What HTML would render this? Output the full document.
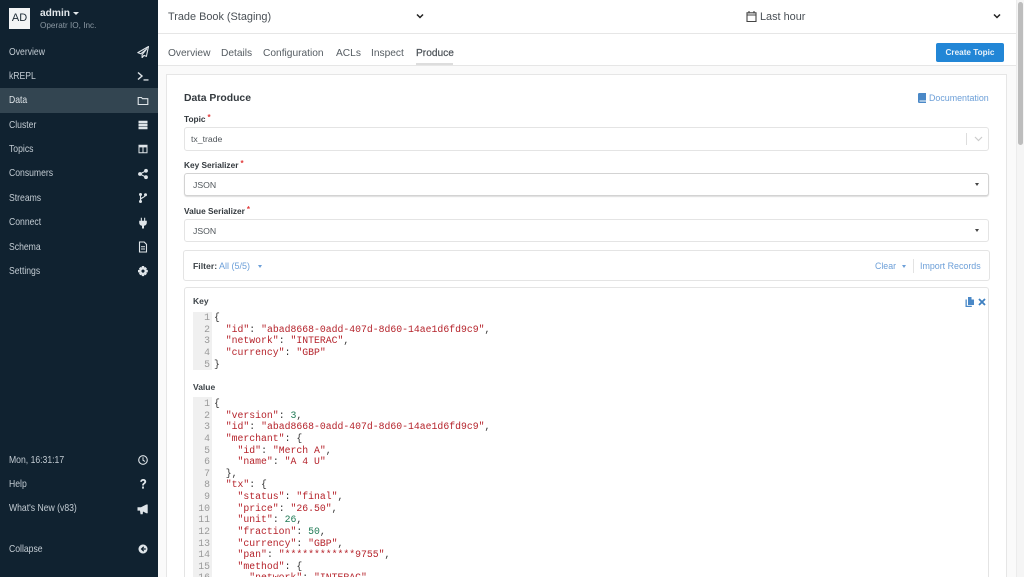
<!DOCTYPE html>
<html><head><meta charset="utf-8">
<style>
html,body{margin:0;padding:0;width:1024px;height:577px;overflow:hidden;background:#fafafa;font-family:"Liberation Sans",sans-serif;color:#3a3f44}
#w{position:relative;width:1024px;height:577px;overflow:hidden}
.a{position:absolute;white-space:nowrap}
.nav{position:absolute;left:9px;font-size:10.4px;color:#c3ccd3;white-space:nowrap;line-height:12px;transform:scaleX(.83);transform-origin:0 0}
.ic{position:absolute;left:137px;width:12px;height:12px;fill:#dfe5e9}
.tab{position:absolute;top:47px;font-size:10.2px;color:#555c62;line-height:13px;white-space:nowrap}
.lab{position:absolute;left:184px;font-size:8.3px;font-weight:bold;color:#33393e;line-height:11px;white-space:nowrap}
.lab i{color:#e23b3b;font-style:normal;font-size:8px;position:relative;top:-2px;margin-left:2px}
.box{position:absolute;left:184px;width:803px;background:#fff;border:1px solid #e4e4e4;border-radius:3px}
.val{position:absolute;left:193px;font-size:8.7px;color:#50565b;line-height:12px}
.caret{position:absolute;width:0;height:0;border-left:2.5px solid transparent;border-right:2.5px solid transparent;border-top:3px solid #444}
.code{position:absolute;font-family:"Liberation Mono",monospace;font-size:9.8px;line-height:11.62px;white-space:pre;color:#333;margin:0}
.ln{position:absolute;background:#f0f0f0;color:#9a9a9a;text-align:right;font-family:"Liberation Mono",monospace;font-size:9.8px;line-height:11.62px;white-space:pre;margin:0;padding-right:2px;box-sizing:border-box}
.s{color:#b5232b}.n{color:#1f7a55}
.link{color:#6c9fd8}
</style></head><body><div id="w">

<!-- sidebar -->
<div class="a" style="left:0;top:0;width:158px;height:577px;background:#102230"></div>
<div class="a" style="left:0;top:88px;width:158px;height:25px;background:#334551"></div>
<div class="a" style="left:9px;top:8px;width:21px;height:21px;background:#f2f4f5;color:#1c2a35;font-size:11px;line-height:21px;text-align:center">AD</div>
<div class="a" style="left:40px;top:7px;font-size:10.2px;font-weight:bold;color:#e3e8eb;line-height:13px">admin</div>
<div class="caret" style="left:73px;top:12px;border-left-width:3.5px;border-right-width:3.5px;border-top:3.5px solid #e3e8eb"></div>
<div class="a" style="left:40px;top:20px;font-size:8.2px;color:#8b98a2;line-height:11px">Operatr IO, Inc.</div>

<div class="nav" style="top:47px">Overview</div>
<div class="nav" style="top:71px">kREPL</div>
<div class="nav" style="top:95px;color:#dde3e7">Data</div>
<div class="nav" style="top:120px">Cluster</div>
<div class="nav" style="top:144px">Topics</div>
<div class="nav" style="top:168px">Consumers</div>
<div class="nav" style="top:193px">Streams</div>
<div class="nav" style="top:217px">Connect</div>
<div class="nav" style="top:242px">Schema</div>
<div class="nav" style="top:266px">Settings</div>
<div class="nav" style="top:455px">Mon, 16:31:17</div>
<div class="nav" style="top:479px">Help</div>
<div class="nav" style="top:503px">What's New (v83)</div>
<div class="nav" style="top:544px">Collapse</div>

<svg class="ic" style="top:46px" viewBox="0 0 12 12"><path d="M11.5 .5 .8 6.6l3 1.2 6-5-4.7 5.900v3l1.900-2.300 2.400 1z" fill="none" stroke="#dfe5e9" stroke-width="1.100" stroke-linejoin="round"/></svg>
<svg class="ic" style="top:70px" viewBox="0 0 12 12"><path d="M1 2.500 5 6 1 9.500" fill="none" stroke="#dfe5e9" stroke-width="1.400"/><path d="M6.500 9.300h5v1.300h-5z"/></svg>
<svg class="ic" style="top:95px" viewBox="0 0 12 12"><path d="M1.200 2.500h3.300l1 1.200h5.300v5.800H1.200z" fill="none" stroke="#dfe5e9" stroke-width="1.100"/></svg>
<svg class="ic" style="top:119px" viewBox="0 0 12 12"><path d="M1.500 1.800h9v2.400h-9zM1.500 4.800h9v2.400h-9zM1.500 7.800h9v2.400h-9z"/></svg>
<svg class="ic" style="top:143px" viewBox="0 0 12 12"><path fill-rule="evenodd" d="M1.500 1.800h9v8.400h-9zM2.500 4.400v4.800h3V4.400zM6.500 4.400v4.800h3V4.400z"/></svg>
<svg class="ic" style="top:168px" viewBox="0 0 12 12"><circle cx="9" cy="2.800" r="1.900"/><circle cx="9" cy="9.200" r="1.900"/><circle cx="3" cy="6" r="1.900"/><path d="M3 6 9 2.800M3 6l6 3.200" stroke="#dfe5e9" stroke-width="1.100"/></svg>
<svg class="ic" style="top:192px" viewBox="0 0 12 12"><circle cx="3.500" cy="2.500" r="1.500"/><circle cx="3.500" cy="9.500" r="1.500"/><circle cx="8.500" cy="2.800" r="1.500"/><path d="M3.500 2.500v7M8.500 2.800c0 3-5 2.500-5 5" fill="none" stroke="#dfe5e9" stroke-width="1.100"/></svg>
<svg class="ic" style="top:217px" viewBox="0 0 12 12"><path d="M3.800 .8h1.100v3H7.100v-3h1.100v3h1.600v1.700c0 2-1.200 3-2.800 3.300V11.500H5V8.800C3.400 8.500 2.200 7.500 2.200 5.500V3.800h1.600z"/></svg>
<svg class="ic" style="top:241px" viewBox="0 0 12 12"><path d="M2.500 1h4.700l2.300 2.400V11h-7z" fill="none" stroke="#dfe5e9" stroke-width="1.100"/><path d="M4 5.300h4v1H4zM4 7.500h4v1H4z"/></svg>
<svg class="ic" style="top:265px" viewBox="0 0 12 12"><path fill-rule="evenodd" d="M4.900 1h2.200l.3 1.500 1-.5 1.500 1.500-.6 1.200 1.500.3v2.200l-1.500.4.600 1.100-1.500 1.500-1-.6-.3 1.500H4.900l-.4-1.500-1 .6L2 8.700l.6-1.100L1 7.200V5l1.600-.3L2 3.500 3.500 2l1 .5zM6 4.500a1.600 1.600 0 1 0 .01 0z"/></svg>
<svg class="ic" style="top:454px" viewBox="0 0 12 12"><circle cx="6" cy="6" r="4.300" fill="none" stroke="#dfe5e9" stroke-width="1.100"/><path d="M6 3.200v3l2 1.200" fill="none" stroke="#dfe5e9"/></svg>
<svg class="ic" style="top:478px" viewBox="0 0 12 12"><path d="M3.200 3.800C3.400 1.800 4.800 1 6.200 1c1.700 0 3 1 3 2.600 0 2.200-2.300 2.100-2.300 3.900H5.100c0-2.700 2.200-2.500 2.200-3.800 0-.6-.5-1-1.200-1-.8 0-1.100.5-1.200 1.200zM5.100 8.500h1.800v2.100H5.100z"/></svg>
<svg class="ic" style="top:503px" viewBox="0 0 12 12"><path d="M.5 4.200h3.500L9.300 1.500h1.400v8.700H9.300L6 8.500l-.3 2.700H3.500L3 7.600H.5z"/></svg>
<svg class="ic" style="top:543px" viewBox="0 0 12 12"><path fill-rule="evenodd" d="M6 1.500a4.500 4.500 0 1 1-.01 0zM6.300 3.400 3.700 6l2.600 2.600.9-.9-1.100-1.100h2.700V5.400H6.100l1.100-1.100z"/></svg>

<!-- top bar -->
<div class="a" style="left:158px;top:0;width:858px;height:33px;background:#fff;border-bottom:1px solid #e6e6e6"></div>
<div class="a" style="left:168px;top:10px;font-size:10.9px;color:#4a5056;line-height:14px">Trade Book (Staging)</div>
<svg class="a" style="left:416px;top:13px" width="8" height="7" viewBox="0 0 8 7"><path d="M1 1.500 4 4.500 7 1.500" fill="none" stroke="#222" stroke-width="1.500"/></svg>
<svg class="a" style="left:746px;top:10px" width="11" height="13" viewBox="0 0 11 13"><path d="M1 2.800h9v8.700H1zM1 5h9M3 1v2.500M8 1v2.500" fill="none" stroke="#444" stroke-width="1.100"/></svg>
<div class="a" style="left:760px;top:10px;font-size:10.9px;color:#4a5056;line-height:14px">Last hour</div>
<svg class="a" style="left:993px;top:13px" width="8" height="7" viewBox="0 0 8 7"><path d="M1 1.500 4 4.500 7 1.500" fill="none" stroke="#222" stroke-width="1.500"/></svg>

<!-- tabs -->
<div class="a" style="left:158px;top:34px;width:858px;height:31px;background:#fff;border-bottom:1px solid #e6e6e6"></div>
<div class="tab" style="left:168px">Overview</div>
<div class="tab" style="left:221px">Details</div>
<div class="tab" style="left:263px">Configuration</div>
<div class="tab" style="left:336px">ACLs</div>
<div class="tab" style="left:371px">Inspect</div>
<div class="tab" style="left:416px;color:#4a5056;-webkit-text-stroke:.2px #4a5056">Produce</div>
<div class="a" style="left:416px;top:63px;width:37px;height:2px;background:#ddd"></div>
<div class="a" style="left:936px;top:43px;width:68px;height:19px;background:#2286d6;border-radius:2px;color:#e8f2fb;font-size:8.2px;font-weight:bold;text-align:center;line-height:19px">Create Topic</div>

<!-- scrollbar -->
<div class="a" style="left:1016px;top:0;width:8px;height:577px;background:#f5f5f5;border-left:1px solid #ececec;box-sizing:border-box"></div>
<div class="a" style="left:1018px;top:2px;width:5px;height:143px;background:#bdbdbd;border-radius:3px"></div>

<!-- card -->
<div class="a" style="left:166px;top:74px;width:839px;height:510px;background:#fff;border:1px solid #e6e6e6"></div>
<div class="a" style="left:184px;top:92px;font-size:10.4px;font-weight:bold;color:#33393e;line-height:14px">Data Produce</div>
<svg class="a" style="left:918px;top:93px" width="8" height="10" viewBox="0 0 8 10"><path d="M1.200 0H8v7.500H1.500v1H8V10H1.200C.5 10 0 9.500 0 8.800V1.200C0 .5.500 0 1.200 0z" fill="#4a88c7"/></svg>
<div class="a link" style="left:929px;top:92px;font-size:8.9px;line-height:12px">Documentation</div>

<div class="lab" style="top:114px">Topic<i>*</i></div>
<div class="box" style="top:127px;height:22px"></div>
<div class="val" style="left:191px;top:133px">tx_trade</div>
<div class="a" style="left:966px;top:133px;width:1px;height:12px;background:#ddd"></div>
<svg class="a" style="left:974px;top:136px" width="9" height="6" viewBox="0 0 9 6"><path d="M1 1 4.500 4.500 8 1" fill="none" stroke="#ccc" stroke-width="1.200"/></svg>

<div class="lab" style="top:160px">Key Serializer<i>*</i></div>
<div class="box" style="top:173px;height:21px;border-color:#d3d3d3;box-shadow:0 1px 1px #ddd"></div>
<div class="val" style="top:179px">JSON</div>
<div class="caret" style="left:975px;top:183px"></div>

<div class="lab" style="top:206px">Value Serializer<i>*</i></div>
<div class="box" style="top:219px;height:21px"></div>
<div class="val" style="top:225px">JSON</div>
<div class="caret" style="left:975px;top:229px"></div>

<!-- filter -->
<div class="box" style="left:183px;top:250px;width:805px;height:29px"></div>
<div class="a" style="left:193px;top:260px;font-size:8.7px;line-height:12px;font-weight:bold;color:#3d4348">Filter:</div>
<div class="a link" style="left:219px;top:260px;font-size:9px;line-height:12px">All (5/5)</div>
<div class="caret" style="left:258px;top:265px;border-top-color:#6c9fd8"></div>
<div class="a link" style="left:875px;top:260px;font-size:8.8px;line-height:12px">Clear</div>
<div class="caret" style="left:902px;top:265px;border-top-color:#6c9fd8"></div>
<div class="a" style="left:913px;top:259px;width:1px;height:14px;background:#e3e3e3"></div>
<div class="a link" style="left:920px;top:260px;font-size:8.9px;line-height:12px">Import Records</div>

<!-- records -->
<div class="box" style="top:287px;height:300px"></div>
<div class="a" style="left:193px;top:295px;font-size:8.5px;font-weight:bold;line-height:12px;color:#3d4348">Key</div>
<svg class="a" style="left:965px;top:297px" width="9" height="10" viewBox="0 0 9 10"><path d="M3 0h3.500v2.500H9V8H3z" fill="#4a88c7"/><path d="M1.800 2.500v6.300h5V10H.5V2.500z" fill="#4a88c7"/></svg>
<svg class="a" style="left:978px;top:298px" width="8" height="8" viewBox="0 0 8 8"><path d="M1 1 7 7M7 1 1 7" stroke="#3d7fc0" stroke-width="1.800"/></svg>

<pre class="ln" style="left:193px;top:312px;width:19px;height:58px">1
2
3
4
5</pre>
<pre class="code" style="left:214px;top:312px">{
  <span class="s">"id"</span>: <span class="s">"abad8668-0add-407d-8d60-14ae1d6fd9c9"</span>,
  <span class="s">"network"</span>: <span class="s">"INTERAC"</span>,
  <span class="s">"currency"</span>: <span class="s">"GBP"</span>
}</pre>

<div class="a" style="left:193px;top:381px;font-size:8.5px;font-weight:bold;line-height:12px;color:#3d4348">Value</div>
<pre class="ln" style="left:193px;top:397px;width:19px;height:180px;overflow:hidden;padding-top:1px">1
2
3
4
5
6
7
8
9
10
11
12
13
14
15
16</pre>
<pre class="code" style="left:214px;top:398px;height:179px;overflow:hidden">{
  <span class="s">"version"</span>: <span class="n">3</span>,
  <span class="s">"id"</span>: <span class="s">"abad8668-0add-407d-8d60-14ae1d6fd9c9"</span>,
  <span class="s">"merchant"</span>: {
    <span class="s">"id"</span>: <span class="s">"Merch A"</span>,
    <span class="s">"name"</span>: <span class="s">"A 4 U"</span>
  },
  <span class="s">"tx"</span>: {
    <span class="s">"status"</span>: <span class="s">"final"</span>,
    <span class="s">"price"</span>: <span class="s">"26.50"</span>,
    <span class="s">"unit"</span>: <span class="n">26</span>,
    <span class="s">"fraction"</span>: <span class="n">50</span>,
    <span class="s">"currency"</span>: <span class="s">"GBP"</span>,
    <span class="s">"pan"</span>: <span class="s">"************9755"</span>,
    <span class="s">"method"</span>: {
      <span class="s">"network"</span>: <span class="s">"INTERAC"</span></pre>
</div></body></html>
